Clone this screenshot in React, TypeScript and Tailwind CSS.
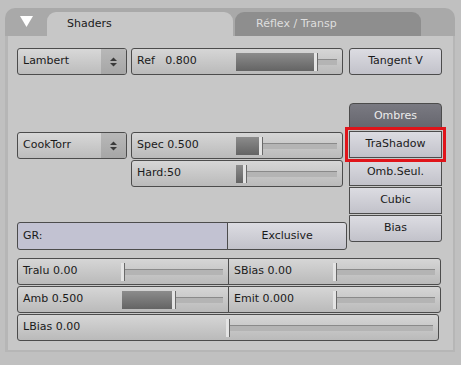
import React from "react";

const font = "font-['DejaVu_Sans',sans-serif] text-[11px] text-[#1a1a1a]";

const Arrows = () => (
  <svg width="9" height="12" viewBox="0 0 9 12">
    <path d="M1 5 L4.5 1.5 L8 5 Z" fill="#3a3a3a" />
    <path d="M1 7 L4.5 10.5 L8 7 Z" fill="#3a3a3a" />
  </svg>
);

const Dropdown = ({ label }: { label: string }) => (
  <div className="flex h-[27px] w-[110px] overflow-hidden rounded-[3px] border border-[#4c4c4c] bg-gradient-to-b from-[#d8d8d8] to-[#bcbcbc]">
    <span className="flex flex-1 items-center pl-[5px]">{label}</span>
    <span className="flex w-[25px] items-center justify-center bg-gradient-to-b from-[#b8b8b8] to-[#a6a6a6]">
      <Arrows />
    </span>
  </div>
);

const Slider = ({
  label,
  value,
  className,
}: {
  label: string;
  value: number;
  className: string;
}) => (
  <div
    className={`flex h-[27px] items-center rounded-[3px] border border-[#4c4c4c] bg-gradient-to-b from-[#d6d6d6] to-[#bababa] ${className}`}
  >
    <span className="flex-1 whitespace-pre pl-[5px]">{label}</span>
    <div className="relative mr-[5px] h-[18px] w-[calc(50%-4px)]">
      <div className="absolute left-0 right-0 top-[6px] h-[6px] border-t border-[#8a8a8a] bg-[#b4b4b4]" />
      <div
        className="absolute left-0 top-0 h-[18px] bg-gradient-to-b from-[#8c8c8c] to-[#646464]"
        style={{ width: `${value * 100}%` }}
      />
      <div
        className="absolute top-0 h-[18px] w-[4px] border-r border-[#6a6a6a] bg-[#e4e4e4]"
        style={{ left: `calc(${value * 100}% - 1px)` }}
      />
    </div>
  </div>
);

const Btn = ({
  label,
  className = "",
}: {
  label: string;
  className?: string;
}) => (
  <div
    className={`flex h-[27px] items-center justify-center rounded-[3px] border border-[#4c4c4c] bg-gradient-to-b from-[#dcdce2] to-[#c2c2ca] ${className}`}
  >
    {label}
  </div>
);

export default function App() {
  return (
    <div className={`h-[365px] w-[461px] bg-[#c0c0c0] pl-[5px] pt-[8px] ${font}`}>
      <div className="w-[450px]">
        <div className="flex h-[28px] items-end rounded-t-[10px] bg-[#a9a9a9]">
          <div className="flex h-full w-[42px] items-center justify-center pb-[2px]">
            <svg width="13" height="11" viewBox="0 0 13 11">
              <path d="M0 0 L13 0 L6.5 11 Z" fill="#ffffff" />
            </svg>
          </div>
          <div className="flex h-[24px] w-[186px] items-center rounded-t-[9px] bg-[#c7c7c7] pl-[20px]">
            Shaders
          </div>
          <div className="ml-[2px] flex h-[24px] w-[186px] items-center rounded-t-[9px] bg-[#8e8e8e] pl-[21px] text-[#dedede]">
            Réflex / Transp
          </div>
        </div>
        <div className="h-[316px] border-b-2 border-l-[3px] border-r-[2px] border-[#b6b6b6] bg-[#c7c7c7] pl-[9px] pt-[12px]">
          <div className="flex">
            <div className="flex w-[330px] flex-col">
              <div className="flex gap-[4px]">
                <Dropdown label="Lambert" />
                <Slider label="Ref   0.800" value={0.78} className="w-[212px]" />
              </div>
              <div className="mt-[57px] flex gap-[4px]">
                <Dropdown label="CookTorr" />
                <div className="flex flex-col gap-[1px]">
                  <Slider label="Spec 0.500" value={0.24} className="w-[212px]" />
                  <Slider label="Hard:50" value={0.08} className="w-[212px]" />
                </div>
              </div>
              <div className="mt-[35px] flex">
                <div className="flex h-[28px] w-[212px] items-center rounded-l-[3px] border border-[#4c4c4c] bg-[#c2c2d2] pl-[5px]">
                  GR:
                </div>
                <Btn label="Exclusive" className="-ml-px h-[28px] w-[120px] rounded-l-none" />
              </div>
            </div>
            <div className="ml-[2px] flex w-[93px] flex-col">
              <Btn label="Tangent V" />
              <div className="mt-[28px] flex flex-col gap-[1px]">
                <div className="flex h-[27px] items-center justify-center rounded-t-[4px] border border-[#4c4c4c] bg-gradient-to-b from-[#7a7a82] to-[#65656d] text-[#ececec]">
                  Ombres
                </div>
                <Btn
                  label="TraShadow"
                  className="relative z-10 rounded-none outline outline-[3px] outline-offset-[1px] outline-[#e0141a]"
                />
                <Btn label="Omb.Seul." className="rounded-none" />
                <Btn label="Cubic" className="rounded-none" />
                <Btn label="Bias" className="rounded-t-none" />
              </div>
            </div>
          </div>
          <div className="mt-[8px] flex w-[424px] flex-col gap-[1px]">
            <div className="flex">
              <Slider label="Tralu 0.00" value={0} className="w-[212px] rounded-r-none" />
              <Slider label="SBias 0.00" value={0} className="-ml-px w-[213px] rounded-l-none" />
            </div>
            <div className="flex">
              <Slider label="Amb 0.500" value={0.5} className="w-[212px] rounded-r-none" />
              <Slider label="Emit 0.000" value={0} className="-ml-px w-[213px] rounded-l-none" />
            </div>
            <Slider label="LBias 0.00" value={0} className="w-[422px]" />
          </div>
        </div>
      </div>
    </div>
  );
}
